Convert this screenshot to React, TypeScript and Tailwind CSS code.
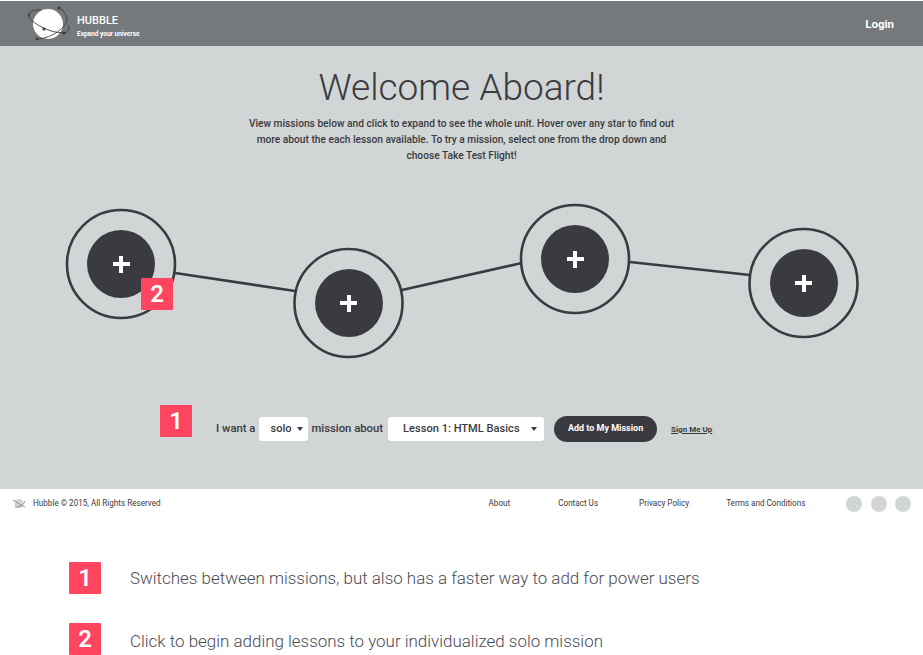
const roboto = "font-['Roboto',sans-serif]"

const stops = [
  { x: 121, y: 69 },
  { x: 348.5, y: 108 },
  { x: 575, y: 64 },
  { x: 803.5, y: 88 }
]

const Badge: React.FC<{ n: number; className?: string }> = ({ n, className }) => (
  <div
    className={`flex h-8 w-8 items-center justify-center rounded-[1px] bg-[#ff4560] text-[24px] font-semibold leading-none text-white ${className || ""}`}>
    {n}
  </div>
)

const Planet: React.FC<{ className: string }> = ({ className }) => (
  <svg viewBox="28 6 42 36" className={className} fill="none">
    <circle cx="48" cy="24" r="15" fill="#fff" />
    <path
      d="M41 10 C33 9 27 12 29 17 C33 24 50 33 64 33 C68 33 70 29 68 25"
      stroke="#3a3b40"
      strokeWidth="0.9"
    />
    <path d="M37 39 C48 39 65 30 67 20 C67 15 63 10 59 8" stroke="#3a3b40" strokeWidth="0.9" />
    <circle cx="59" cy="8" r="1.6" fill="#3a3b40" />
    <circle cx="44" cy="29" r="1.6" fill="#3a3b40" />
    <circle cx="64" cy="33" r="1.6" fill="#3a3b40" />
    <circle cx="37" cy="39" r="1.4" fill="#3a3b40" />
    <circle cx="29" cy="15" r="1.1" fill="#3a3b40" />
  </svg>
)

const Select: React.FC<{ label: string; className: string; arrow: string }> = ({
  label,
  className,
  arrow
}) => (
  <div
    className={`relative flex h-6 items-center rounded-[3px] bg-white text-[11.1px] font-medium text-[#3a3b40] ${className}`}>
    {label}
    <span
      className={`absolute top-[10px] h-0 w-0 border-x-[3px] border-t-[4px] border-x-transparent border-t-[#3a3b40] ${arrow}`}
    />
  </div>
)

const MissionMap = () => (
  <div className="relative h-[140px] w-full">
    <svg className="absolute inset-0 h-full w-full overflow-visible" fill="none" stroke="#3a3b40" strokeWidth="2.6">
      <path d="M175 78 L295 96" />
      <path d="M402 95 L522 68" />
      <path d="M630 67 L750 80" />
      {stops.map((stop) => (
        <circle key={stop.x} cx={stop.x} cy={stop.y} r="54" />
      ))}
    </svg>
    {stops.map((stop) => (
      <div
        key={stop.x}
        className="absolute flex h-[68px] w-[68px] -translate-x-1/2 -translate-y-1/2 items-center justify-center rounded-full bg-[#3a3b40]"
        style={{ left: stop.x, top: stop.y }}>
        <span className="absolute h-[4px] w-[17px] bg-white" />
        <span className="absolute h-[17px] w-[4px] bg-white" />
      </div>
    ))}
    <Badge n={2} className="absolute left-[141px] top-[83px]" />
  </div>
)

export default function App() {
  return (
    <div className={`min-h-[655px] w-[923px] overflow-hidden bg-white ${roboto}`}>
      {/* header */}
      <header className="mt-px flex h-[45px] items-center justify-between bg-[#76797b] pl-[28px] pr-[29px] text-white">
        <div className="flex items-center gap-[7px]">
          <Planet className="h-[36px] w-[42px]" />
          <div className="pt-[6px]">
            <div className="text-[11px] font-medium leading-[12px]">HUBBLE</div>
            <div className="mt-[3px] text-[6.5px] font-bold leading-[8px]">Expand your universe</div>
          </div>
        </div>
        <div className="pt-[3px] text-[11.5px] font-bold">Login</div>
      </header>

      {/* main */}
      <main className="flex h-[443px] flex-col items-center bg-[#d1d5d5] pt-[20px] text-[#3a3b40]">
        <h1 className="text-[37px] font-light leading-[44px]">Welcome Aboard!</h1>
        <p className="mt-[6px] w-[432px] text-center text-[10.2px] font-medium leading-[16px]">
          View missions below and click to expand to see the whole unit. Hover over any star to find out
          more about the each lesson available. To try a mission, select one from the drop down and
          choose Take Test Flight!
        </p>
        <div className="mt-[31px] w-full">
          <MissionMap />
        </div>
        <div className="mt-[70px] flex w-full items-end pl-[160px]">
          <Badge n={1} className="self-start" />
          <div className="ml-[24px] mt-[11px] flex items-center text-[11.3px] font-medium">
            <span>I want a</span>
            <Select label="solo" className="ml-[4px] w-[49px] pl-[11px]" arrow="right-[5px]" />
            <span className="ml-[3px]">mission about</span>
            <Select label="Lesson 1: HTML Basics" className="ml-[5px] w-[156px] pl-[15px]" arrow="right-[7px]" />
            <button className="ml-[10px] h-[26px] w-[103px] rounded-full bg-[#3a3b40] text-[9px] font-bold text-white">
              Add to My Mission
            </button>
            <a className="ml-[14px] mt-[2px] text-[8px] font-bold underline">Sign Me Up</a>
          </div>
        </div>
      </main>

      {/* footer */}
      <footer className="flex h-[29px] items-center pl-[12px] text-[8.15px] text-[#3a3b40]">
        <svg viewBox="0 0 14 11" className="h-[11px] w-[14px]" fill="none">
          <circle cx="7" cy="5.5" r="4.5" fill="#d1d5d5" />
          <path d="M1 2 C4 3 9 8 13 9 M3 9 C6 10 12 7 13 3" stroke="#77797d" strokeWidth="0.8" />
        </svg>
        <span className="ml-[7px]">Hubble © 2015, All Rights Reserved</span>
        <a className="ml-[328px]">About</a>
        <a className="ml-[48px]">Contact Us</a>
        <a className="ml-[41px]">Privacy Policy</a>
        <a className="ml-[37px]">Terms and Conditions</a>
        <div className="ml-[41px] flex gap-[8.5px]">
          <span className="h-4 w-4 rounded-full bg-[#d1d5d5]" />
          <span className="h-4 w-4 rounded-full bg-[#d1d5d5]" />
          <span className="h-4 w-4 rounded-full bg-[#d1d5d5]" />
        </div>
      </footer>

      {/* annotations */}
      <section className="flex flex-col gap-[29px] pl-[69px] pt-[44px] text-[16.95px] font-light text-[#4a4b55]">
        <div className="flex items-center gap-[29px]">
          <Badge n={1} />
          <span className="mt-[2px]">Switches between missions, but also has a faster way to add for power users</span>
        </div>
        <div className="flex items-center gap-[29px]">
          <Badge n={2} />
          <span className="mt-[5px]">Click to begin adding lessons to your individualized solo mission</span>
        </div>
      </section>
    </div>
  )
}
